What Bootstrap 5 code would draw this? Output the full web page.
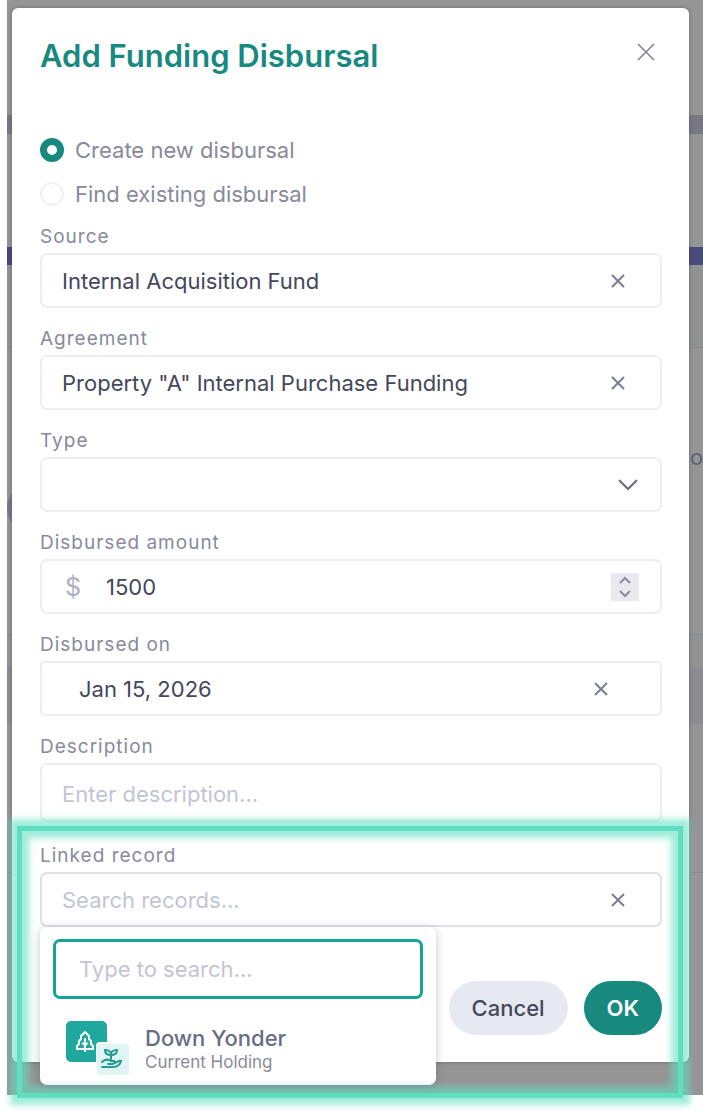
<!DOCTYPE html>
<html lang="en">
<head>
<meta charset="utf-8">
<meta name="viewport" content="width=device-width, initial-scale=1">
<title>Add Funding Disbursal</title>
<link rel="stylesheet" href="https://cdn.jsdelivr.net/npm/bootstrap@5.3.0/dist/css/bootstrap.min.css">
<style>
  :root { --brand: #17897f; --accent: #14a398; --line: #edeef5; --muted: #898a9b; --ink: #45475a; --hint: #c3c5d6; --glow: #5fdfc0; }
  body { font-family: Inter, "Liberation Sans", sans-serif; background: #fff; color: var(--ink); font-size: 22px; line-height: 28px; min-height: 100vh; padding-bottom: 20px; }
  .stage { display: grid; margin-left: 7px; }
  .stage > * { grid-area: 1 / 1; min-width: 0; }

  /* dimmed page behind the dialog */
  .backdrop-page { background: #959596; overflow: hidden; }
  .strip-a { height: 115px; }
  .strip-b { height: 19px; background: #777884; }
  .strip-c { height: 113px; }
  .strip-d { height: 18px; background: #484a7c; }
  .strip-e { height: 83px; background: #919294; border-bottom: 1px solid #88898d; }
  .strip-f { height: 287px; border-bottom: 1px solid #88898d; padding-top: 95px; }
  .strip-g { height: 32px; background: #929395; }
  .strip-h { height: 57px; background: #8b8c91; }
  .strip-i { height: 149px; border-bottom: 1px solid #88898d; }
  .peek { color: #606176; line-height: 28px; height: 28px; width: 13px; }
  .ring { width: 50px; height: 50px; border: 5px solid #777884; border-radius: 50%; margin-top: 12px; }

  .dialog { margin: 8px 14px 33px 5px; padding: 28px 27px 27px 28px; background: #fff; border-radius: 6px; box-shadow: 0 0 4px rgba(60,60,70,.45); position: relative; }
  .dialog-title { font-size: 31px; line-height: 40px; font-weight: 600; color: var(--brand); }
  .icon-btn { border: 0; background: none; padding: 0; color: #7b7d93; display: flex; align-items: center; justify-content: center; width: 24px; height: 24px; }
  .choices { margin-top: 52px; margin-bottom: 11px; color: var(--muted); }
  .choice { display: flex; align-items: center; gap: 11px; height: 44px; }
  .choice .form-check-input { width: 24px; height: 24px; margin: 0; border: 2px solid #f0f0f6; box-shadow: none; }
  .choice .form-check-input:checked { background: #fff; border: 7px solid var(--brand); }

  .field { margin-bottom: 21px; }
  .field-label { display: block; font-size: 19px; line-height: 20px; letter-spacing: 1px; color: var(--muted); margin-bottom: 6px; }
  .box { display: flex; align-items: center; height: 55px; border: 2px solid var(--line); border-radius: 7px; padding: 0 30px 0 20px; background: #fff; }
  .box input { border: 0; outline: 0; background: none; padding: 0; flex: 1; min-width: 0; color: var(--ink); appearance: textfield; }
  .box input::-webkit-inner-spin-button { display: none; }
  ::placeholder { color: var(--hint) !important; opacity: 1; }
  .box-date { padding: 0 47px 0 37px; border-radius: 5px; }
  .box-search { border-color: #dfe0ea; }
  .box-select { width: 100%; appearance: none; padding-right: 50px; color: var(--ink);
    background: #fff url("data:image/svg+xml,%3Csvg xmlns='http://www.w3.org/2000/svg' width='20' height='12' fill='none' stroke='%23696b78' stroke-width='2'%3E%3Cpath d='M1 1l9 9 9-9'/%3E%3C/svg%3E") no-repeat right 22px center; }
  .box-area { display: block; width: 100%; height: 59px; line-height: 28px; padding: 15px 20px; resize: none; overflow: hidden; }
  .currency { color: #aeb0c0; font-size: 25px; width: 44px; padding-left: 3px; }
  .stepper { width: 28px; height: 28px; background: #e9e9ef; margin-right: -9px; display: grid; }
  .stepper button { border: 0; background: none; padding: 0; display: flex; align-items: center; justify-content: center; color: #8c8d9c; }

  .spotlight { position: relative; padding-top: 3px; }
  .spotlight::after { content: ""; position: absolute; inset: -17px -21px -63px -23px; border: 5px solid var(--glow); box-shadow: 0 0 6px 7px rgba(95,223,192,.6), inset 0 0 6px 7px rgba(95,223,192,.6); pointer-events: none; z-index: 5; }
  .picker { position: absolute; top: 100%; left: 0; width: 396px; padding: 12px 13px 9px; background: #fff; border-radius: 7px; box-shadow: 0 2px 10px rgba(70,70,90,.3); z-index: 3; }
  .box-focus { height: 60px; border: 3px solid var(--accent); padding: 0 23px; }
  .result { display: flex; align-items: center; gap: 16px; width: 100%; margin-top: 21px; padding: 0 0 0 13px; border: 0; background: none; text-align: left; }
  .result-title { font-weight: 500; line-height: 28px; color: #6a6c83; }
  .result-note { font-size: 17px; line-height: 20px; color: var(--muted); }
  .actions { display: flex; justify-content: flex-end; gap: 16px; padding-top: 54px; }
  .pill { --bs-btn-font-size: 22px; --bs-btn-border-width: 0; height: 54px; padding: 0 23px; border-radius: 27px; font-weight: 500; }
  .pill-light, .pill-light:hover { background: #e7e9f2; color: var(--ink); }
  .pill-brand, .pill-brand:hover { background: var(--brand); color: #fff; font-weight: 600; }
</style>
</head>
<body>
<div class="stage">
  <div class="backdrop-page">
    <div class="strip-a"></div><div class="strip-b"></div><div class="strip-c"></div><div class="strip-d"></div><div class="strip-e"></div>
    <div class="strip-f"><div class="peek ms-auto">o</div><div class="ring"></div></div>
    <div class="strip-g"></div><div class="strip-h"></div><div class="strip-i"></div>
  </div>

  <main class="dialog" role="dialog" aria-labelledby="dialog-title">
    <header class="d-flex justify-content-between">
      <h1 class="dialog-title mb-0" id="dialog-title">Add Funding Disbursal</h1>
      <button type="button" class="icon-btn mt-1 me-1" aria-label="Close">
        <svg width="18" height="18" fill="none" stroke="currentColor" stroke-width="1.5"><path d="M1 1l16 16M17 1L1 17"/></svg>
      </button>
    </header>
    <form>
      <div class="choices">
        <div class="choice"><input class="form-check-input" type="radio" name="mode" id="mode-new" checked><label for="mode-new">Create new disbursal</label></div>
        <div class="choice"><input class="form-check-input" type="radio" name="mode" id="mode-find"><label for="mode-find">Find existing disbursal</label></div>
      </div>
      <div class="field">
        <label class="field-label" for="source">Source</label>
        <div class="box"><input id="source" type="text" value="Internal Acquisition Fund">
          <button type="button" class="icon-btn" aria-label="Clear source"><svg width="14" height="14" fill="none" stroke="currentColor" stroke-width="2"><path d="M1 1l12 12M13 1L1 13"/></svg></button></div>
      </div>
      <div class="field">
        <label class="field-label" for="agreement">Agreement</label>
        <div class="box"><input id="agreement" type="text" value="Property &quot;A&quot; Internal Purchase Funding">
          <button type="button" class="icon-btn" aria-label="Clear agreement"><svg width="14" height="14" fill="none" stroke="currentColor" stroke-width="2"><path d="M1 1l12 12M13 1L1 13"/></svg></button></div>
      </div>
      <div class="field">
        <label class="field-label" for="type">Type</label>
        <select id="type" class="box box-select"><option></option></select>
      </div>
      <div class="field">
        <label class="field-label" for="amount">Disbursed amount</label>
        <div class="box"><span class="currency">$</span><input id="amount" type="number" value="1500">
          <div class="stepper">
            <button type="button" aria-label="Increase"><svg width="12" height="8" fill="none" stroke="currentColor" stroke-width="2"><path d="M1 7l5-5 5 5"/></svg></button>
            <button type="button" aria-label="Decrease"><svg width="12" height="8" fill="none" stroke="currentColor" stroke-width="2"><path d="M1 1l5 5 5-5"/></svg></button>
          </div></div>
      </div>
      <div class="field">
        <label class="field-label" for="date">Disbursed on</label>
        <div class="box box-date"><input id="date" type="text" value="Jan 15, 2026">
          <button type="button" class="icon-btn" aria-label="Clear date"><svg width="14" height="14" fill="none" stroke="currentColor" stroke-width="2"><path d="M1 1l12 12M13 1L1 13"/></svg></button></div>
      </div>
      <div class="field">
        <label class="field-label" for="description">Description</label>
        <textarea id="description" class="box box-area" rows="1" placeholder="Enter description..."></textarea>
      </div>
      <div class="spotlight">
        <div class="position-relative">
          <label class="field-label" for="record">Linked record</label>
          <div class="box box-search"><input id="record" type="text" placeholder="Search records...">
            <button type="button" class="icon-btn" aria-label="Clear record"><svg width="14" height="14" fill="none" stroke="currentColor" stroke-width="2"><path d="M1 1l12 12M13 1L1 13"/></svg></button></div>
          <div class="picker">
            <div class="box box-focus"><input type="text" aria-label="Type to search" placeholder="Type to search..."></div>
            <button type="button" class="result">
              <svg width="63" height="56" viewBox="0 0 63 56" fill="none">
                <rect y="1" width="41" height="41" rx="5" fill="#1fa99e"/>
                <path d="M19 12l-4 4v3l-2 2v3l-2 2v3h16v-3l-2-2v-3l-2-2v-3zM19 18v14M16 23l3 2 3-2" stroke="#fff" stroke-width="2" stroke-linejoin="round"/>
                <rect x="30" y="22" width="34" height="34" rx="4" fill="#fff"/>
                <rect x="31" y="24" width="32" height="31" rx="3" fill="#dff4f3"/>
                <path d="M45 39v-4c-4 0-6-2-6-5 4 0 6 1 6 5 0-4 2-5 6-5 0 3-2 5-6 5M36 42c3-3 6-3 9-1h3c2 1 0 3-2 3h-4M48 43c3 0 4-3 7-2-1 4-4 6-8 6H36" stroke="#249b91" stroke-width="2" stroke-linecap="round"/>
              </svg>
              <span><span class="result-title d-block">Down Yonder</span><span class="result-note d-block">Current Holding</span></span>
            </button>
          </div>
        </div>
        <div class="actions">
          <button type="button" class="btn pill pill-light">Cancel</button>
          <button type="submit" class="btn pill pill-brand">OK</button>
        </div>
      </div>
    </form>
  </main>
</div>
<script src="https://cdn.jsdelivr.net/npm/bootstrap@5.3.0/dist/js/bootstrap.bundle.min.js"></script>
</body>
</html>
